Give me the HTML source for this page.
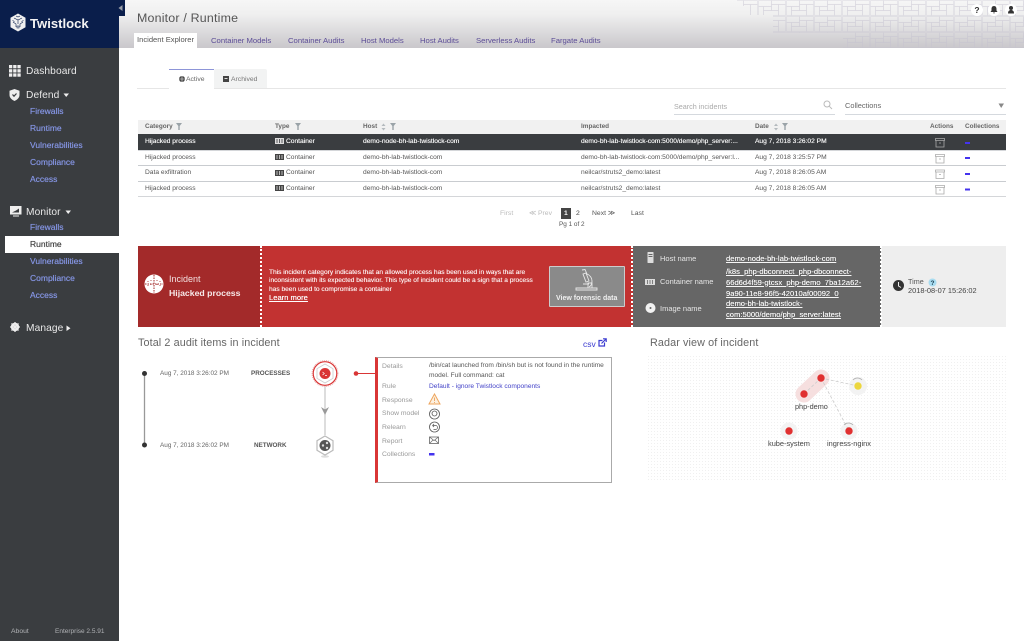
<!DOCTYPE html>
<html><head><meta charset="utf-8"><title>Monitor / Runtime</title>
<style>
html,body{margin:0;padding:0;background:#fff}
#p{position:relative;width:1024px;height:641px;overflow:hidden;font-family:"Liberation Sans",sans-serif;background:#fff;color:#444;filter:blur(.35px)}
#p div,#p span.a{position:absolute}
.t{position:absolute;white-space:nowrap;line-height:12px;font-size:7px;color:#444}
.s{font-size:8.5px;color:#8494e2;left:30px;text-shadow:0 0 .5px #8494e2}
.m{font-size:10.2px;color:#e8e8e8;left:26px;letter-spacing:.1px}
.h{font-size:6.4px;top:121px;font-weight:bold;color:#666}
.c{font-size:6.65px;color:#555}
.w{color:#f6f6f6;text-shadow:0 0 .4px #fff}
.tb{font-size:7.7px;color:#5c4d97;top:35px}
.l{font-size:6.8px;color:#999;left:382px}
.v{font-size:7.6px;color:#f6f6f6;text-decoration:underline;text-shadow:0 0 .3px #fff}
</style></head><body>
<div id="p">
<!-- header -->
<div style="left:119px;top:0;width:905px;height:48px;background:linear-gradient(#f6f6f6,#efefef 30%,#c9c7cb)"></div>
<svg style="position:absolute;left:730px;top:0" width="294" height="48">
<defs><pattern id="cp" width="28" height="16" patternUnits="userSpaceOnUse"><path d="M.5.5h13v6h-13zM13.500.5h14v4h-14zM.5 6.500h5v9h-5zM5.500 6.500h8v4h-8zM13.500 4.500h7v6h-7zM20.500 4.500h7v11h-7zM5.500 10.500h15v5h-15z" fill="none" stroke="#c4c1cf" stroke-width=".5"/></pattern></defs>
<path d="M7 0H294V48H113V33H43V15H20V6H7Z" fill="url(#cp)" opacity=".6"/>
</svg>
<span class="t" style="left:137px;top:9px;font-size:12.400px;line-height:18px;color:#555;letter-spacing:.2px">Monitor / Runtime</span>
<div style="left:134px;top:33px;width:63px;height:15px;background:#fff"></div>
<span class="t" style="left:137px;top:34px;font-size:7.600px;color:#555">Incident Explorer</span>
<span class="t tb" style="left:211px">Container Models</span>
<span class="t tb" style="left:288px">Container Audits</span>
<span class="t tb" style="left:361px">Host Models</span>
<span class="t tb" style="left:420px">Host Audits</span>
<span class="t tb" style="left:476px">Serverless Audits</span>
<span class="t tb" style="left:551px">Fargate Audits</span>
<svg style="position:absolute;left:970px;top:3px" width="50" height="15">
<circle cx="7" cy="7" r="6" fill="#fff"/><circle cx="24" cy="7" r="6" fill="#fff"/><circle cx="41" cy="7" r="6" fill="#fff"/>
<text x="7" y="10" font-size="8.500" font-weight="bold" text-anchor="middle" fill="#333" font-family="Liberation Sans">?</text>
<path d="M24 3c-1.800 0-2.500 1.400-2.500 3v1.500l-1 1.500h7l-1-1.500V6c0-1.600-.7-3-2.500-3zM23 9.500h2l-1 1.200z" fill="#333"/>
<circle cx="41" cy="5" r="2" fill="#333"/><path d="M38 10.500c0-2.500 1.200-3.500 3-3.500s3 1 3 3.500z" fill="#333"/>
</svg>

<!-- sidebar -->
<div style="left:0;top:48px;width:119px;height:593px;background:#3a3d40"></div>
<div style="left:0;top:0;width:119px;height:48px;background:#0a1e4b"></div>
<div style="left:119px;top:0;width:6px;height:16px;background:#0a1e4b"></div>
<svg style="position:absolute;left:117px;top:4px" width="8" height="8"><path d="M5.500 1v6L1.500 4z" fill="#9a9ea8"/></svg>
<svg style="position:absolute;left:9px;top:13px" width="18" height="20">
<path d="M9 .5l7.500 4.300v9.400L9 18.500 1.500 14.200V4.800z" fill="#f0f0f0"/>
<path d="M5 5l4 2 4-2M9 7v4M4 9l3 2v3M14 9l-3 2v3M3.500 7.500l2 1M14.500 7.500l-2 1M7 3l2 1 2-1M8 13h2v2H8z" stroke="#0a1e4b" stroke-width=".6" fill="none"/>
</svg>
<span class="t" style="left:30px;top:16px;font-size:13.100px;line-height:16px;font-weight:bold;color:#f4f4f4">Twistlock</span>

<svg style="position:absolute;left:9px;top:65px" width="12" height="12"><g fill="#eee"><rect width="3.300" height="3.300"/><rect x="4.200" width="3.300" height="3.300"/><rect x="8.400" width="3.300" height="3.300"/><rect y="4.200" width="3.300" height="3.300"/><rect x="4.200" y="4.200" width="3.300" height="3.300"/><rect x="8.400" y="4.200" width="3.300" height="3.300"/><rect y="8.400" width="3.300" height="3.300"/><rect x="4.200" y="8.400" width="3.300" height="3.300"/><rect x="8.400" y="8.400" width="3.300" height="3.300"/></g></svg>
<span class="t m" style="top:65.500px">Dashboard</span>
<svg style="position:absolute;left:9px;top:89px" width="11" height="12"><path d="M5.500 0L10.500 1.800V6c0 3-2.500 4.800-5 6-2.500-1.200-5-3-5-6V1.800z" fill="#eee"/><path d="M3.500 5.500l1.500 1.700 2.500-2.700" stroke="#3a3d40" stroke-width="1.200" fill="none"/></svg>
<span class="t m" style="top:89.500px">Defend</span>
<svg style="position:absolute;left:63px;top:93px" width="7" height="5"><path d="M.5.500h5.500L3.200 4z" fill="#eee"/></svg>
<span class="t s" style="top:105px">Firewalls</span>
<span class="t s" style="top:122px">Runtime</span>
<span class="t s" style="top:139px">Vulnerabilities</span>
<span class="t s" style="top:156px">Compliance</span>
<span class="t s" style="top:173px">Access</span>
<svg style="position:absolute;left:10px;top:206px" width="12" height="11"><path d="M0 0h11.500v8.500H0z" fill="#eee"/><path d="M2 6.500l4-2 3-2v4z" fill="#3a3d40"/><path d="M3 9.500h6v1H3z" fill="#eee"/></svg>
<span class="t m" style="top:206.500px">Monitor</span>
<svg style="position:absolute;left:65px;top:210px" width="7" height="5"><path d="M.5.500h5.500L3.200 4z" fill="#eee"/></svg>
<span class="t s" style="top:221px">Firewalls</span>
<div style="left:5px;top:236px;width:114px;height:17px;background:#fff"></div>
<span class="t s" style="top:238px;color:#444;text-shadow:0 0 .4px #444">Runtime</span>
<span class="t s" style="top:255px">Vulnerabilities</span>
<span class="t s" style="top:272px">Compliance</span>
<span class="t s" style="top:289px">Access</span>
<svg style="position:absolute;left:10px;top:322px" width="10" height="10"><circle cx="5" cy="5" r="3.200" fill="none" stroke="#eee" stroke-width="2"/><path d="M5 0v10M0 5h10M1.500 1.500l7 7M8.500 1.500l-7 7" stroke="#eee" stroke-width="1.300"/></svg>
<span class="t m" style="top:322.500px">Manage</span>
<svg style="position:absolute;left:66px;top:325px" width="6" height="7"><path d="M.5.500v5.500L4.500 3.200z" fill="#eee"/></svg>
<span class="t" style="left:11px;top:625.500px;font-size:6.800px;color:#b0b2b5">About</span>
<span class="t" style="left:55px;top:625.500px;font-size:6.500px;color:#b0b2b5">Enterprise 2.5.91</span>

<!-- subtabs -->
<div style="left:169px;top:69px;width:45px;height:20px;background:#fff;border-top:1px solid #8d95d8;box-sizing:border-box"></div>
<div style="left:214px;top:69px;width:53px;height:19px;background:#f2f3f3;border-radius:2px 2px 0 0"></div>
<div style="left:137px;top:88px;width:869px;height:1px;background:#e6e6e6"></div>
<div style="left:169px;top:88px;width:45px;height:1px;background:#fff"></div>
<svg style="position:absolute;left:179px;top:76px" width="6" height="6"><circle cx="3" cy="3" r="3" fill="#444"/><path d="M3 0v6M0 3h6" stroke="#eee" stroke-width=".6"/></svg>
<span class="t" style="left:186px;top:73.500px;font-size:6.800px;color:#666">Active</span>
<svg style="position:absolute;left:223px;top:76px" width="7" height="6"><rect width="6" height="6" fill="#444"/><rect x="1.500" y="2" width="3" height="1" fill="#ddd"/></svg>
<span class="t" style="left:231px;top:73.500px;font-size:6.800px;color:#777">Archived</span>

<!-- search -->
<span class="t" style="left:674px;top:100.500px;font-size:7.200px;color:#aaa">Search incidents</span>
<svg style="position:absolute;left:823px;top:100px" width="10" height="10"><circle cx="4" cy="4" r="3" fill="none" stroke="#bbb"/><path d="M6.200 6.200l2.800 2.800" stroke="#bbb"/></svg>
<div style="left:674px;top:114px;width:161px;height:1px;background:#d5d9de"></div>
<span class="t" style="left:845px;top:99.500px;font-size:7.400px;color:#666">Collections</span>
<svg style="position:absolute;left:998px;top:103px" width="7" height="6"><path d="M.5.500h5.500L3.200 5z" fill="#888"/></svg>
<div style="left:845px;top:114px;width:161px;height:1px;background:#d5d9de"></div>

<!-- table -->
<div style="left:138px;top:120px;width:868px;height:14px;background:#f1f1f1"></div>
<span class="t h" style="left:145px">Category</span>
<span class="t h" style="left:275px">Type</span>
<span class="t h" style="left:363px">Host</span>
<span class="t h" style="left:581px">Impacted</span>
<span class="t h" style="left:755px">Date</span>
<span class="t h" style="left:930px">Actions</span>
<span class="t h" style="left:965px">Collections</span>
<svg style="position:absolute;left:138px;top:120px" width="700" height="14"><g fill="#9aa3a8"><path d="M38 3h6l-2.300 3v4h-1.400V6zM157 3h6l-2.300 3v4h-1.400V6zM252 3h6l-2.300 3v4h-1.400V6zM644 3h6l-2.300 3v4h-1.400V6z"/><path d="M247.500 6l-2-2.500-2 2.500zM247.500 8l-2 2.500-2-2.500zM640 6l-2-2.500-2 2.500zM640 8l-2 2.500-2-2.500z" opacity=".7"/></g></svg>

<div style="left:138px;top:134px;width:868px;height:16px;background:#3a3d40"></div>
<div style="left:138px;top:150px;width:868px;height:1px;background:#d4d6d9"></div>
<div style="left:138px;top:165px;width:868px;height:1px;background:#c9ccd0"></div>
<div style="left:138px;top:181px;width:868px;height:1px;background:#c9ccd0"></div>
<div style="left:138px;top:196px;width:868px;height:1px;background:#d4d6d9"></div>

<span class="t c w" style="left:145px;top:135.500px">Hijacked process</span>
<span class="t c w" style="left:286px;top:135.500px">Container</span>
<span class="t c w" style="left:363px;top:135.500px">demo-node-bh-lab-twistlock-com</span>
<span class="t c w" style="left:581px;top:135.500px">demo-bh-lab-twistlock-com:5000/demo/php_server:...</span>
<span class="t c w" style="left:755px;top:135.500px">Aug 7, 2018 3:26:02 PM</span>

<span class="t c" style="left:145px;top:151.500px">Hijacked process</span>
<span class="t c" style="left:286px;top:151.500px">Container</span>
<span class="t c" style="left:363px;top:151.500px">demo-bh-lab-twistlock-com</span>
<span class="t c" style="left:581px;top:151.500px">demo-bh-lab-twistlock-com:5000/demo/php_server:l...</span>
<span class="t c" style="left:755px;top:151.500px">Aug 7, 2018 3:25:57 PM</span>

<span class="t c" style="left:145px;top:167px">Data exfiltration</span>
<span class="t c" style="left:286px;top:167px">Container</span>
<span class="t c" style="left:363px;top:167px">demo-bh-lab-twistlock-com</span>
<span class="t c" style="left:581px;top:167px">neilcar/struts2_demo:latest</span>
<span class="t c" style="left:755px;top:167px">Aug 7, 2018 8:26:05 AM</span>

<span class="t c" style="left:145px;top:182.500px">Hijacked process</span>
<span class="t c" style="left:286px;top:182.500px">Container</span>
<span class="t c" style="left:363px;top:182.500px">demo-bh-lab-twistlock-com</span>
<span class="t c" style="left:581px;top:182.500px">neilcar/struts2_demo:latest</span>
<span class="t c" style="left:755px;top:182.500px">Aug 7, 2018 8:26:05 AM</span>

<svg style="position:absolute;left:275px;top:134px" width="10" height="64">
<g><rect y="4" width="9" height="6" fill="#ddd"/><path d="M2 5v4M4.500 5v4M7 5v4" stroke="#3a3d40" stroke-width=".8"/></g>
<g><rect y="20" width="9" height="6" fill="#444"/><path d="M2 21v4M4.500 21v4M7 21v4" stroke="#ddd" stroke-width=".8"/></g>
<g><rect y="36" width="9" height="6" fill="#444"/><path d="M2 37v4M4.500 37v4M7 37v4" stroke="#ddd" stroke-width=".8"/></g>
<g><rect y="51" width="9" height="6" fill="#444"/><path d="M2 52v4M4.500 52v4M7 52v4" stroke="#ddd" stroke-width=".8"/></g>
</svg>
<svg style="position:absolute;left:934px;top:134px" width="40" height="64">
<g fill="none" stroke="#aaa" stroke-width=".8">
<path d="M1.500 4.500h9v2h-9zM2 6.500v6.500h8V6.500M5 9h2"/>
<path d="M1.500 20.500h9v2h-9zM2 22.500v6.500h8v-6.500M5 25h2"/>
<path d="M1.500 36h9v2h-9zM2 38v6.500h8V38M5 40.500h2"/>
<path d="M1.500 51.500h9v2h-9zM2 53.500v6.500h8v-6.500M5 56h2"/>
</g>
<g fill="#4433ee"><rect x="31" y="8" width="5" height="2"/><rect x="31" y="23" width="5" height="2"/><rect x="31" y="39" width="5" height="2"/><rect x="31" y="54.500" width="5" height="2"/></g>
</svg>

<!-- pagination -->
<span class="t" style="left:500px;top:207.500px;font-size:6.800px;color:#bbb">First</span>
<span class="t" style="left:529px;top:207.500px;font-size:6.800px;color:#bbb">≪ Prev</span>
<div style="left:561px;top:208px;width:10px;height:11px;background:#444"></div>
<span class="t" style="left:564px;top:207.500px;font-size:6.800px;color:#fff;font-weight:bold">1</span>
<span class="t" style="left:576px;top:207.500px;font-size:6.800px;color:#444">2</span>
<span class="t" style="left:592px;top:207.500px;font-size:6.800px;color:#555">Next ≫</span>
<span class="t" style="left:631px;top:207.500px;font-size:6.800px;color:#555">Last</span>
<span class="t" style="left:559px;top:219px;font-size:6.400px;color:#555">Pg 1 of 2</span>

<!-- banner -->
<div style="left:138px;top:246px;width:122px;height:81px;background:#a32a2a"></div>
<div style="left:260px;top:246px;width:373px;height:81px;background:#c23231"></div>
<div style="left:633px;top:246px;width:248px;height:81px;background:#666"></div>
<div style="left:881px;top:246px;width:125px;height:81px;background:#eee"></div>
<div style="left:260px;top:246px;width:0;height:81px;border-left:2px dotted #fff"></div>
<div style="left:631px;top:246px;width:0;height:81px;border-left:2px dotted #fff"></div>
<div style="left:880px;top:246px;width:0;height:81px;border-left:2px dotted #fff"></div>
<svg style="position:absolute;left:144px;top:274px" width="20" height="20"><circle cx="10" cy="10" r="9.500" fill="#fff"/><path d="M10 1v18M1 10h18" stroke="#a32a2a" stroke-width="1" stroke-dasharray="1.500 1"/><path d="M4 7v6M7 6v8M13 6v8M16 7v6" stroke="#a32a2a" stroke-width=".8" stroke-dasharray="1 3"/></svg>
<span class="t" style="left:169px;top:273px;font-size:9px;color:#f3e0e0">Incident</span>
<span class="t" style="left:169px;top:287px;font-size:8.700px;color:#f7eaea;font-weight:bold">Hijacked process</span>
<span class="t" style="left:269px;top:269.200px;font-size:6.600px;color:#fbeaea;line-height:8.200px;text-shadow:0 0 .4px #fff">This incident category indicates that an allowed process has been used in ways that are<br>inconsistent with its expected behavior. This type of incident could be a sign that a process<br>has been used to compromise a container</span>
<span class="t" style="left:269px;top:292px;font-size:7.600px;color:#fff;text-decoration:underline;text-shadow:0 0 .4px #fff">Learn more</span>
<div style="left:549px;top:266px;width:76px;height:41px;background:#8a8a8a;border:1px solid #ccc;box-sizing:border-box;border-radius:1px"></div>
<svg style="position:absolute;left:574px;top:269px" width="26" height="25"><g fill="none" stroke="#e8e8e8" stroke-width=".9"><path d="M8 1l3-.5 2 4.500c3 1 5 4 5 7 0 3-1 5-3 6M9 5l3-1 3 8-3 1zM9 15h6"/><path d="M2 19h21v2H2z"/><path d="M14 14h4v5h-4z"/></g></svg>
<span class="t" style="left:556px;top:292.500px;font-size:7px;font-weight:bold;color:#f0f0f0">View forensic data</span>

<svg style="position:absolute;left:645px;top:250px" width="14" height="70">
<rect x="2.500" y="2" width="6" height="11" rx=".5" fill="#ddd"/><rect x="3.500" y="4" width="4" height="1" fill="#666"/><rect x="3.500" y="6" width="4" height="1" fill="#666"/>
<rect y="29" width="10" height="6" fill="#ddd"/><path d="M2.500 30v4M5 30v4M7.500 30v4" stroke="#666" stroke-width=".8"/>
<circle cx="5.500" cy="58" r="5" fill="#f2f2f2"/><circle cx="5.500" cy="58" r="1" fill="#666"/></svg>
<span class="t" style="left:660px;top:253px;font-size:7.500px;color:#e6e6e6">Host name</span>
<span class="t" style="left:660px;top:276px;font-size:7.500px;color:#e6e6e6">Container name</span>
<span class="t" style="left:660px;top:302.500px;font-size:7.500px;color:#e6e6e6">Image name</span>
<span class="t v" style="left:726px;top:253px">demo-node-bh-lab-twistlock-com</span>
<span class="t v" style="left:726px;top:265.500px;line-height:11px">/k8s_php-dbconnect_php-dbconnect-<br>66d6d4f59-gtcsx_php-demo_7ba12a62-<br>9a90-11e8-96f5-42010af00092_0</span>
<span class="t v" style="left:726px;top:297.500px;line-height:11px">demo-bh-lab-twistlock-<br>com:5000/demo/php_server:latest</span>
<svg style="position:absolute;left:892px;top:279px" width="13" height="13"><circle cx="6.500" cy="6.500" r="5.500" fill="#333"/><path d="M6.500 3v4l2.500 1.500" stroke="#eee" fill="none"/></svg>
<span class="t" style="left:908px;top:276px;font-size:7.200px;color:#555">Time</span>
<svg style="position:absolute;left:928px;top:278px" width="9" height="9"><circle cx="4.500" cy="4.500" r="4" fill="#a9dcf0"/><text x="4.500" y="7" font-size="6.500" font-weight="bold" text-anchor="middle" fill="#245" font-family="Liberation Sans">?</text></svg>
<span class="t" style="left:908px;top:285px;font-size:7.400px;color:#444">2018-08-07 15:26:02</span>

<!-- audit section -->
<span class="t" style="left:138px;top:336px;font-size:10.800px;line-height:14px;color:#666;letter-spacing:.1px">Total 2 audit items in incident</span>
<span class="t" style="left:583px;top:337.500px;font-size:8.500px;color:#3b3bd0">csv</span>
<svg style="position:absolute;left:598px;top:338px" width="9" height="9"><path d="M6.500 4.500V8H1V2.500h3.500" fill="none" stroke="#3b3bd0" stroke-width="1.200"/><path d="M3.500 5.500L8 1M5 .8h3.200V4" fill="none" stroke="#3b3bd0" stroke-width="1.200"/></svg>
<svg style="position:absolute;left:138px;top:355px" width="240" height="130">
<path d="M6.500 18V90" stroke="#999" stroke-width="1.300"/>
<circle cx="6.500" cy="18.500" r="2.500" fill="#333"/><circle cx="6.500" cy="90" r="2.500" fill="#333"/>
<path d="M187 26V80" stroke="#bbb" stroke-width="1"/>
<path d="M183 52l4 2.500 4-2.500-4 8z" fill="#999"/>
<circle cx="187" cy="18.500" r="13" fill="none" stroke="#e6a5a5" stroke-width=".8" stroke-dasharray="1 1"/>
<circle cx="187" cy="18.500" r="11.800" fill="#fff" stroke="#d93636" stroke-width="1.200"/>
<path d="M187 9l8 4.700v9.600L187 28l-8-4.700v-9.600z" fill="#fff" stroke="#ccc" stroke-width=".8"/>
<circle cx="187" cy="18.500" r="5.500" fill="#d93636"/><path d="M184.500 17l1.800 1.500-1.800 1.500M187 20.500h2" stroke="#fff" stroke-width=".7" fill="none"/>
<ellipse cx="187" cy="101.500" rx="4" ry="1.200" fill="#ddd"/>
<path d="M187 81l8 4.700v9.600L187 100l-8-4.700v-9.600z" fill="#fff" stroke="#bbb" stroke-width="1.200"/>
<circle cx="187" cy="90.500" r="5.500" fill="#555"/><circle cx="185" cy="90.500" r="1.200" fill="#ddd"/><circle cx="189" cy="88" r="1.200" fill="#ddd"/><circle cx="189" cy="93" r="1.200" fill="#ddd"/>
<circle cx="218" cy="18.500" r="2.300" fill="#d93636"/><path d="M218 18.500h19" stroke="#d93636" stroke-width=".9"/>
</svg>
<span class="t" style="left:160px;top:367.500px;font-size:6.400px;color:#666">Aug 7, 2018 3:26:02 PM</span>
<span class="t" style="left:251px;top:367.500px;font-size:6.300px;color:#555;font-weight:bold">PROCESSES</span>
<span class="t" style="left:160px;top:439.500px;font-size:6.400px;color:#666">Aug 7, 2018 3:26:02 PM</span>
<span class="t" style="left:254px;top:439.500px;font-size:6.300px;color:#555;font-weight:bold">NETWORK</span>

<!-- details -->
<div style="left:375px;top:357px;width:237px;height:126px;box-sizing:border-box;border:1px solid #aaa;border-left:3px solid #d93636;background:#fff"></div>
<span class="t l" style="top:360.500px">Details</span>
<span class="t" style="left:429px;top:361px;font-size:6.600px;color:#555;line-height:9.500px">/bin/cat launched from /bin/sh but is not found in the runtime<br>model. Full command: cat</span>
<span class="t l" style="top:381px">Rule</span>
<span class="t" style="left:429px;top:381px;font-size:6.600px;color:#4242c8">Default - ignore Twistlock components</span>
<span class="t l" style="top:395px">Response</span>
<span class="t l" style="top:408px">Show model</span>
<span class="t l" style="top:421.500px">Relearn</span>
<span class="t l" style="top:435.500px">Report</span>
<span class="t l" style="top:449px">Collections</span>
<svg style="position:absolute;left:428px;top:393px" width="13" height="67">
<path d="M6.500 1l5.500 10H1z" fill="#fdf0df" stroke="#eda55e" stroke-width="1"/><path d="M6.500 4.500v3.500M6.500 9v1" stroke="#eda55e" stroke-width=".9"/>
<circle cx="6.500" cy="21" r="5" fill="none" stroke="#555" stroke-width=".8"/><circle cx="6.500" cy="20.500" r="2.500" fill="none" stroke="#555" stroke-width=".8"/>
<circle cx="6.500" cy="34" r="5" fill="none" stroke="#555" stroke-width=".8"/><path d="M4.500 32.500h3a2 2 0 110 4h-2M4.500 32.500l1.500-1.500M4.500 32.500L6 34" fill="none" stroke="#555" stroke-width=".7"/>
<rect x="1.500" y="44" width="9" height="6.500" fill="none" stroke="#666" stroke-width=".8"/><path d="M1.500 44l4.500 3.500 4.500-3.500M1.500 50.500l3.500-3.500M10.500 50.500l-3.500-3.500" fill="none" stroke="#666" stroke-width=".7"/>
<rect x="1" y="60" width="5.500" height="2.500" fill="#4433ee"/>
</svg>

<!-- radar -->
<span class="t" style="left:650px;top:336px;font-size:10.800px;line-height:14px;color:#666;letter-spacing:.1px">Radar view of incident</span>
<svg style="position:absolute;left:648px;top:356px" width="358" height="126">
<defs><pattern id="dt" width="3" height="3" patternUnits="userSpaceOnUse"><rect width="1" height="1" fill="#f0f0f0"/></pattern></defs>
<rect width="358" height="126" fill="url(#dt)"/>
<path d="M173 22L156 38" stroke="#f6dfdf" stroke-width="17" stroke-linecap="round"/>
<circle cx="210" cy="30" r="9" fill="#f3f3f3"/><circle cx="141" cy="75" r="8.500" fill="#f3f3f3"/><circle cx="201" cy="75" r="8.500" fill="#f3f3f3"/>
<path d="M173 22L156 38M173 22L210 30M173 22L201 75" stroke="#ccc" stroke-width=".8" stroke-dasharray="3 2" fill="none"/>
<path d="M205 24a6 6 0 0 1 9 0M196 69a6 6 0 0 1 9 0" stroke="#aaa" stroke-width=".7" fill="none"/>
<circle cx="173" cy="22" r="3.700" fill="#e03030"/><circle cx="156" cy="38" r="3.700" fill="#e03030"/>
<circle cx="210" cy="30" r="3.700" fill="#ecd63e"/><circle cx="141" cy="75" r="3.700" fill="#e03030"/><circle cx="201" cy="75" r="3.700" fill="#e03030"/>
</svg>
<span class="t" style="left:795px;top:400.500px;font-size:7.300px;color:#444">php-demo</span>
<span class="t" style="left:768px;top:437.500px;font-size:7.400px;color:#444">kube-system</span>
<span class="t" style="left:827px;top:437.500px;font-size:7.400px;color:#444">ingress-nginx</span>
</div>
</body></html>
